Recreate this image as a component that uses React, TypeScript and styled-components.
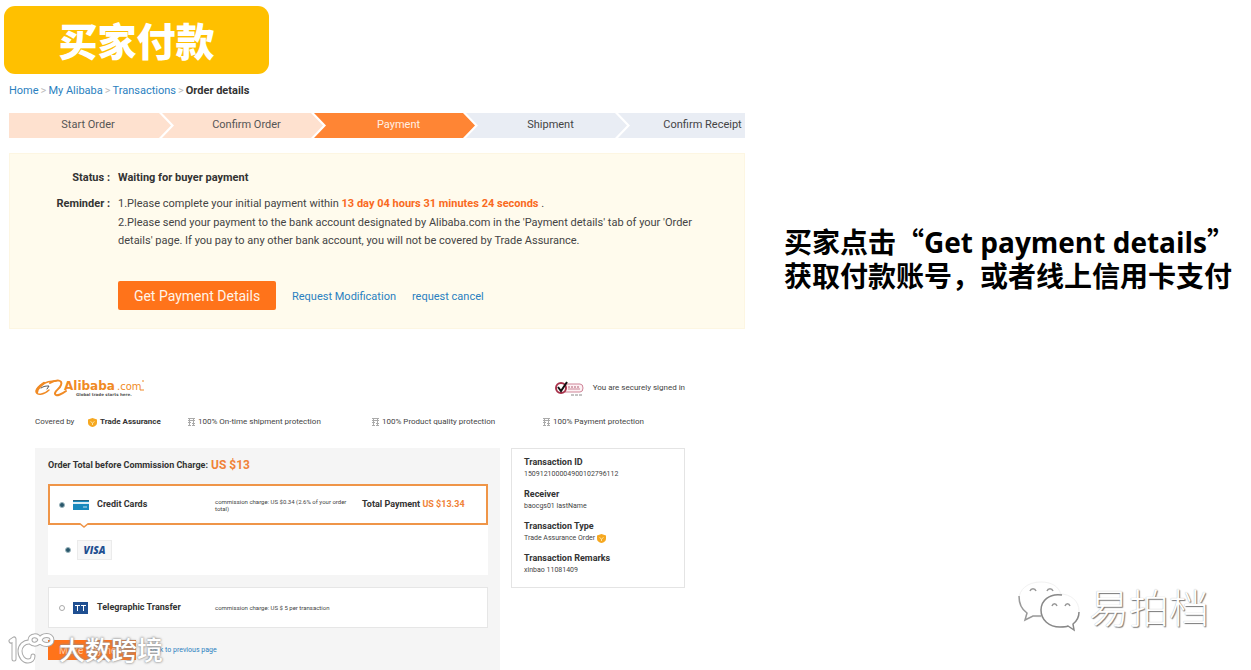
import React from "react";
import styled, { createGlobalStyle } from "styled-components";

const GlobalStyle = createGlobalStyle`
  *, *::before, *::after { box-sizing: border-box; }
  body {
    margin: 0;
    background: #fff;
    color: #444;
    font-family: Roboto, "Noto Sans CJK SC", sans-serif;
    font-size: 11px;
  }
  h1, h2, p, ol, ul, dl, dd { margin: 0; padding: 0; }
  ol, ul { list-style: none; }
  a { color: #2a7fc0; text-decoration: none; }
`;

const Page = styled.div`
  position: relative;
  display: grid;
  grid-template-columns: 736fr 506fr;
  min-height: 100vh;
  padding-left: 9px;
  overflow: hidden;
`;

const Shots = styled.main`
  display: flex;
  flex-direction: column;
  min-width: 0;
`;

const Title = styled.h1`
  width: 265px;
  height: 68px;
  margin: 6px 0 0 -5px;
  border-radius: 11px;
  background: #ffc000;
  color: #fff;
  font: 900 39px/66px "Noto Sans CJK SC", sans-serif;
  text-align: center;
`;

const Crumbs = styled.nav`
  display: flex;
  gap: 2px;
  margin-top: 9px;
  line-height: 16px;
  color: #bbb;
  b { color: #333; }
`;

const Steps = styled.ol`
  display: flex;
  margin-top: 14px;
  overflow: hidden;
`;

const stepColors = {
  done: ["#fee1cf", "#555"],
  current: ["#ff8534", "#fff0e4"],
  next: ["#e9edf4", "#444"],
};

const Step = styled.li<{ $state: keyof typeof stepColors }>`
  flex: 0 0 161px;
  height: 25px;
  margin-right: -9px;
  padding-left: 8px;
  background: ${(p) => stepColors[p.$state][0]};
  color: ${(p) => stepColors[p.$state][1]};
  line-height: 24px;
  text-align: center;
  clip-path: polygon(0 0, calc(100% - 12px) 0, 100% 50%, calc(100% - 12px) 100%, 0 100%, 12px 50%);
  &:first-child {
    flex-basis: 162px;
    padding: 0 4px 0 0;
    clip-path: polygon(0 0, calc(100% - 12px) 0, 100% 50%, calc(100% - 12px) 100%, 0 100%);
  }
`;

const StatusPanel = styled.section`
  margin-top: 15px;
  padding: 15px 40px 18px 0;
  border: 1px solid #fdf6e2;
  background: #fffbed;
  line-height: 18px;
`;

const Facts = styled.dl`
  display: grid;
  grid-template-columns: 100px 1fr;
  gap: 8px;
  dt { color: #333; font-weight: bold; text-align: right; }
  p + p { margin-top: 1px; }
`;

const Strong = styled.strong<{ $accent?: boolean }>`
  color: ${(p) => (p.$accent ? "#f96a1e" : "#333")};
`;

const StatusActions = styled.div`
  display: flex;
  align-items: center;
  gap: 16px;
  margin: 31px 0 0 108px;
  a { padding-top: 3px; }
`;

const PrimaryButton = styled.button<{ $small?: boolean }>`
  width: ${(p) => (p.$small ? 88 : 158)}px;
  height: ${(p) => (p.$small ? 20 : 29)}px;
  padding: 0;
  border: 0;
  border-radius: ${(p) => (p.$small ? 0 : 2)}px;
  background: #ff731a;
  color: ${(p) => (p.$small ? "#ffc9a3" : "#fff3e8")};
  font: ${(p) => (p.$small ? 10 : 14)}px Roboto, sans-serif;
`;

const Checkout = styled.section`
  display: flex;
  flex: 1;
  flex-direction: column;
  margin: 49px 60px 0 26px;
  font-size: 8px;
  line-height: 10px;
`;

const CheckoutHeader = styled.header`
  display: flex;
  align-items: center;
  justify-content: space-between;
  height: 20px;
`;

const SignedIn = styled.div`
  display: flex;
  align-items: center;
  gap: 8px;
`;

const Protections = styled.ul`
  display: grid;
  grid-template-columns: 153fr 184fr 171fr 142fr;
  margin-top: 18px;
  line-height: 12px;
`;

const Protection = styled.li`
  display: flex;
  align-items: center;
  gap: 3px;
`;

const CoveredBy = styled.span`
  width: 50px;
`;

const Columns = styled.div`
  display: grid;
  grid-template-columns: 465fr 174fr;
  flex: 1;
  gap: 11px;
  align-items: start;
  margin-top: 20px;
`;

const PayPanel = styled.form`
  align-self: stretch;
  padding: 8px 12px 10px 13px;
  background: #f5f5f5;
`;

const Total = styled.h2`
  display: flex;
  align-items: center;
  gap: 3px;
  margin-bottom: 10px;
  color: #333;
  font-size: 9px;
  line-height: 18px;
`;

const Amount = styled.span`
  color: #f08238;
  font-size: 12px;
`;

const Method = styled.div<{ $selected?: boolean }>`
  position: relative;
  display: grid;
  grid-template-columns: 6px 16px 110px 139px 1fr;
  align-items: center;
  column-gap: 8px;
  height: 41px;
  padding-left: ${(p) => (p.$selected ? 9 : 10)}px;
  border: ${(p) => (p.$selected ? "2px solid #ef9548" : "1px solid #e6e6e6")};
  background: #fff;
  line-height: 7px;
`;

const Pointer = styled.svg`
  position: absolute;
  top: 37px;
  left: 28px;
`;

const MethodName = styled.label`
  color: #333;
  font-size: 9px;
  font-weight: bold;
`;

const Charge = styled.span`
  font-size: 6px;
`;

const Payable = styled.strong`
  color: #333;
  font-size: 9px;
  white-space: nowrap;
  span { color: #f08238; }
`;

const Radio = styled.input`
  appearance: none;
  width: 6px;
  height: 6px;
  margin: 0;
  border: 1px solid #aaa;
  border-radius: 50%;
  background: #fff;
  &:checked { border-color: #9bb5bd; background: #28566a; }
`;

const CardChoice = styled.div`
  display: flex;
  align-items: center;
  gap: 6px;
  height: 50px;
  margin-bottom: 12px;
  padding-left: 17px;
  background: #fff;
`;

const Visa = styled.label`
  width: 35px;
  height: 20px;
  border: 1px solid #ebebeb;
  background: #f7f7f7;
  color: #1f4f91;
  font: italic 800 10px/19px "Open Sans", sans-serif;
  text-align: center;
`;

const FormActions = styled.div`
  display: flex;
  align-items: center;
  gap: 12px;
  margin-top: 12px;
  font-size: 7px;
`;

const Transaction = styled.dl`
  padding: 7px 12px 11px;
  border: 1px solid #e4e4e4;
  font-size: 7px;
  line-height: 12px;
  dt { color: #333; font-size: 9px; font-weight: bold; }
  dd { display: flex; align-items: center; gap: 2px; height: 12px; }
  dd + dt { margin-top: 8px; }
`;

const Caption = styled.aside`
  padding: 225px 0 0 39px;
  color: #000;
  font: bold 28px/33px "Noto Sans CJK SC", sans-serif;
  white-space: nowrap;
`;

const Latin = styled.span`
  font-family: "Open Sans", sans-serif;
`;

const Watermark = styled.div<{ $side: "left" | "right" }>`
  position: absolute;
  display: flex;
  align-items: center;
  bottom: ${(p) => (p.$side === "left" ? 3 : 36)}px;
  ${(p) => (p.$side === "left" ? "left: 8px; gap: 4px;" : "right: 42px; gap: 8px;")}
  color: #fff;
  font-family: "Noto Sans CJK SC", sans-serif;
  font-size: ${(p) => (p.$side === "left" ? 26 : 40)}px;
  font-weight: ${(p) => (p.$side === "left" ? 500 : 300)};
  line-height: ${(p) => (p.$side === "left" ? 36 : 56)}px;
  text-shadow: ${(p) =>
    p.$side === "left" ? "0 0 2px #888, 0 0 3px #999" : "1px 1px 1px #777, 0 0 1px #aaa"};
`;

const AlibabaLogo = () => (
  <svg width="112" height="20" viewBox="0 0 112 20" role="img" aria-label="Alibaba.com">
    <g fill="none" stroke="#f08a24" strokeLinecap="round">
      <path d="M21 3C12 2 2 8 1 13c0 5 8 4 13-1" strokeWidth="1.500" />
      <path d="M9 5C5 8 2 11 2 14" strokeWidth="2.500" />
      <path d="M15 5c7-4 13-3 11 2-1 4-7 6-6 9 1 3 7 0 11-3" strokeWidth="2" />
      <path d="M6 10c3-2 5-2 8-2l-2 3" stroke="#555" strokeWidth="1" />
    </g>
    <text x="29" y="12" fill="#f08a24" fontFamily="DejaVu Sans" fontWeight="bold" fontSize="12">Alibaba</text>
    <text x="82" y="12" fill="#f08a24" fontFamily="DejaVu Sans" fontSize="10">.com</text>
    <text x="41" y="18" fill="#555" fontFamily="DejaVu Sans" fontWeight="bold" fontSize="4">Global trade starts here.</text>
    <path d="M107 3h2M105 12h4" stroke="#f08a24" />
  </svg>
);

const SecureSeal = () => (
  <svg width="31" height="17" viewBox="0 0 31 17" aria-hidden="true">
    <path d="M11 4h15a3 4 0 0 1 0 8H11z" fill="#fdf1f4" stroke="#cf8497" />
    <circle cx="7" cy="8" r="5" fill="#fff" stroke="#a8324b" strokeWidth="2" />
    <path d="M4 7l3 4 6-9" fill="none" stroke="#111" strokeWidth="2" />
    <path d="M14 7h12" stroke="#b25b70" strokeDasharray="2 1" />
    <path d="M14 9h12" stroke="#c98495" />
    <path d="M17 15h12" stroke="#888" strokeDasharray="3 1" />
  </svg>
);

const Shield = () => (
  <svg width="9" height="9" viewBox="0 0 9 9" aria-hidden="true">
    <path d="M4.500 0L9 1.500V5c0 2-2 3.500-4.500 4C2 8.500 0 7 0 5V1.500z" fill="#f6a821" />
    <path d="M2.500 3.500L4.500 5l2-1.500M4.500 5v2" fill="none" stroke="#fde3a0" />
  </svg>
);

const Guarantee = () => (
  <svg width="7" height="8" viewBox="0 0 7 8" aria-hidden="true">
    <path d="M0 .5h7M0 2.500h7M1.500 0v8M5.500 0v8M0 4.500h3M4 5.500h3M0 7.500h3M4 7.500h3" stroke="#aaa" />
  </svg>
);

const CardIcon = () => (
  <svg width="16" height="10" viewBox="0 0 16 10" aria-hidden="true">
    <path d="M0 0h16v10H0z" fill="#1889bd" />
    <path d="M0 2h16v2H0z" fill="#d9edf6" />
    <path d="M0 0h16v1H0z" fill="#27647f" />
    <path d="M10 7h4" stroke="#bfe2f1" />
  </svg>
);

const TelegraphIcon = () => (
  <svg width="15" height="12" viewBox="0 0 15 12" aria-hidden="true">
    <path d="M0 0h15v12H0z" fill="#1f4f91" />
    <path d="M2 3.500h5M4.500 3v6M8 3.500h5M10.500 3v6" stroke="#fff" />
  </svg>
);

const RunnerMark = () => (
  <svg width="47" height="32" viewBox="0 0 47 32" aria-hidden="true">
    {[["#aaa", 5], ["#fff", 3]].map(([color, width]) => (
      <g key={color} fill="none" stroke={color} strokeWidth={width} strokeLinecap="round" strokeLinejoin="round">
        <path d="M3 8l3-2v20M21 9c-5 0-9 4-9 9 0 6 4 10 8 10 3 0 5-2 5-5" />
        <path d="M32 7c-2-6-10-5-10 0s8 6 10 0 12-6 12 0-10 6-12 0z" />
      </g>
    ))}
  </svg>
);

const ChatMark = () => (
  <svg width="64" height="52" viewBox="0 0 64 52" fill="#fff" aria-hidden="true">
    <path d="M44 15C42 6 34 2 24 2 10 2 2 10 2 19c0 6 3 11 8 14l-2 7 8-4c3 1 6 1 9 1" stroke="#f2f2f2" />
    <path d="M2 16c0 8 2 13 8 17l-2 7 8-4h8" fill="none" stroke="#999" strokeWidth="1.500" />
    <path d="M43 14c-11 0-19 7-19 16s8 17 19 17c3 0 6 0 8-1l6 4-1-6c4-3 6-8 6-13 0-10-8-17-19-17z" stroke="#f2f2f2" />
    <path d="M45 15c-13-2-21 6-21 15 0 10 8 17 19 17 3 0 6 0 8-1l6 4-1-6c4-3 6-7 6-12" fill="none" stroke="#888" strokeWidth="1.500" />
    <path d="M13 11c1-3 5-3 6 0M30 11c1-3 5-3 6 0M35 26c1-3 4-3 5 0M48 26c1-3 4-3 5 0" fill="none" stroke="#999" strokeWidth="1.500" />
  </svg>
);

const App = () => (
  <>
    <GlobalStyle />
    <Page>
      <Shots>
        <Title>买家付款</Title>
        <Crumbs aria-label="Breadcrumb">
          <a href="#home">Home</a>
          <span>&gt;</span>
          <a href="#my">My Alibaba</a>
          <span>&gt;</span>
          <a href="#transactions">Transactions</a>
          <span>&gt;</span>
          <b>Order details</b>
        </Crumbs>
        <Steps>
          <Step $state="done">Start Order</Step>
          <Step $state="done">Confirm Order</Step>
          <Step $state="current">Payment</Step>
          <Step $state="next">Shipment</Step>
          <Step $state="next">Confirm Receipt</Step>
        </Steps>
        <StatusPanel>
          <Facts>
            <dt>Status :</dt>
            <dd><Strong>Waiting for buyer payment</Strong></dd>
            <dt>Reminder :</dt>
            <dd>
              <p>1.Please complete your initial payment within <Strong $accent>13 day 04 hours 31 minutes 24 seconds</Strong> .</p>
              <p>2.Please send your payment to the bank account designated by Alibaba.com in the 'Payment details' tab of your 'Order details' page. If you pay to any other bank account, you will not be covered by Trade Assurance.</p>
            </dd>
          </Facts>
          <StatusActions>
            <PrimaryButton type="button">Get Payment Details</PrimaryButton>
            <a href="#modify">Request Modification</a>
            <a href="#cancel">request cancel</a>
          </StatusActions>
        </StatusPanel>

        <Checkout>
          <CheckoutHeader>
            <AlibabaLogo />
            <SignedIn><SecureSeal />You are securely signed in</SignedIn>
          </CheckoutHeader>
          <Protections>
            <Protection><CoveredBy>Covered by</CoveredBy><Shield /><Strong>Trade Assurance</Strong></Protection>
            <Protection><Guarantee />100% On-time shipment protection</Protection>
            <Protection><Guarantee />100% Product quality protection</Protection>
            <Protection><Guarantee />100% Payment protection</Protection>
          </Protections>
          <Columns>
            <PayPanel>
              <Total>Order Total before Commission Charge: <Amount>US $13</Amount></Total>
              <Method $selected>
                <Radio type="radio" name="method" id="credit" defaultChecked />
                <CardIcon />
                <MethodName htmlFor="credit">Credit Cards</MethodName>
                <Charge>commission charge: US $0.34 (2.6% of your order total)</Charge>
                <Payable>Total Payment <span>US $13.34</span></Payable>
                <Pointer width="12" height="6" viewBox="0 0 12 6" aria-hidden="true">
                  <path d="M1 0l5 4 5-4" fill="#fff" stroke="#ef9548" strokeWidth="1.500" />
                </Pointer>
              </Method>
              <CardChoice>
                <Radio type="radio" name="card" id="visa" defaultChecked />
                <Visa htmlFor="visa">VISA</Visa>
              </CardChoice>
              <Method>
                <Radio type="radio" name="method" id="tt" />
                <TelegraphIcon />
                <MethodName htmlFor="tt">Telegraphic Transfer</MethodName>
                <Charge>commission charge: US $ 5 per transaction</Charge>
              </Method>
              <FormActions>
                <PrimaryButton type="button" $small>Make Payment</PrimaryButton>
                <a href="#back">Back to previous page</a>
              </FormActions>
            </PayPanel>
            <Transaction>
              <dt>Transaction ID</dt>
              <dd>150912100004900102796112</dd>
              <dt>Receiver</dt>
              <dd>baocgs01 lastName</dd>
              <dt>Transaction Type</dt>
              <dd>Trade Assurance Order <Shield /></dd>
              <dt>Transaction Remarks</dt>
              <dd>xinbao 11081409</dd>
            </Transaction>
          </Columns>
        </Checkout>
      </Shots>
      <Caption>
        <p>买家点击“<Latin>Get payment details</Latin>”</p>
        <p>获取付款账号，或者线上信用卡支付</p>
      </Caption>
      <Watermark $side="left"><RunnerMark />大数跨境</Watermark>
      <Watermark $side="right"><ChatMark />易拍档</Watermark>
    </Page>
  </>
);

export default App;
